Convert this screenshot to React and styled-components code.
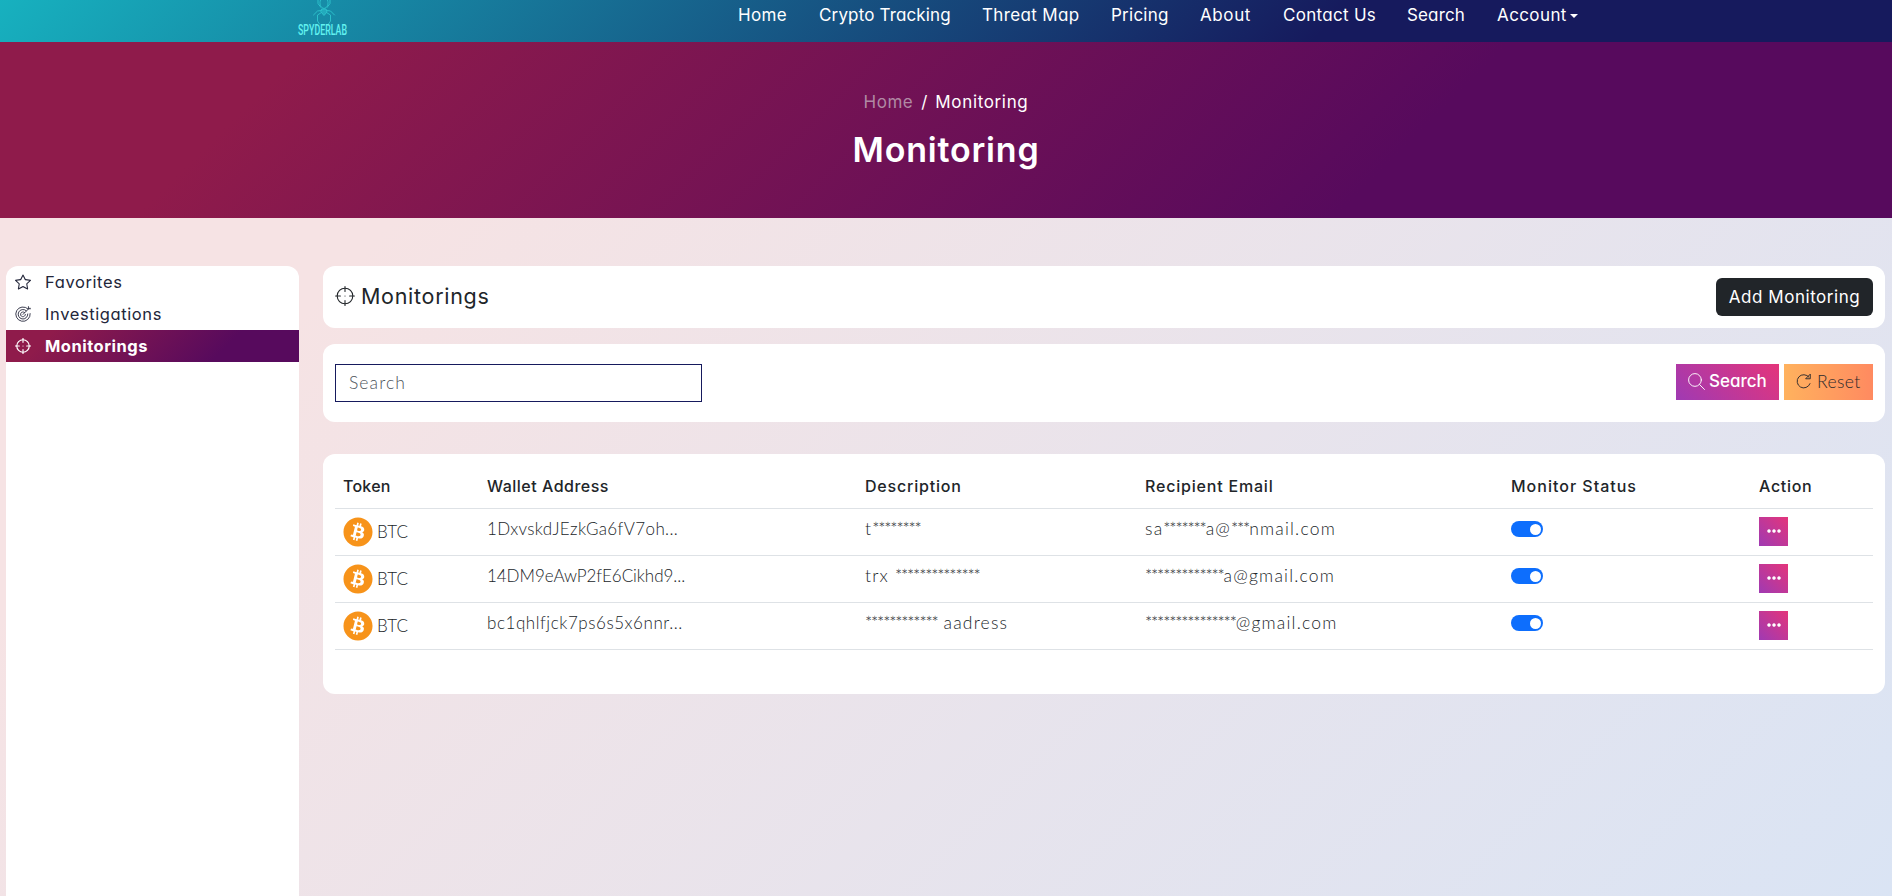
import React from 'react';
import styled, { createGlobalStyle, css } from 'styled-components';
import { BsStar, BsThreeDots } from 'react-icons/bs';
import { FaBitcoin } from 'react-icons/fa';

const sans = `Inter, "Open Sans", sans-serif`;
const light = `Lato, "Open Sans", sans-serif`;
const wine = 'linear-gradient(135deg, #8f1b4b 15%, #570a5d 73%)';
const magenta = 'linear-gradient(45deg, #9f3ab3 0%, #e4357b 100%)';

const GlobalStyle = createGlobalStyle`
  *, *::before, *::after { box-sizing: border-box; }
  html, body { margin: 0; height: 100%; }
  body {
    overflow: hidden;
    color: #212529;
    font-family: ${sans};
    font-size: 17px;
    line-height: 24px;
    font-feature-settings: "cv11", "calt" 0;
  }
`;

const Page = styled.div`
  display: flex;
  flex-direction: column;
  height: 100vh;
  background: linear-gradient(135deg, #f6e3e4 22%, #dae4f4 100%);
`;

const Spaced = styled.span`
  letter-spacing: ${(p) => p.$ls || 0}px;
`;

const NavBar = styled.header`
  display: flex;
  align-items: flex-start;
  flex: none;
  height: 42px;
  padding-left: 296px;
  background: linear-gradient(135deg, #17b1bf 0%, #161a5d 70%);
`;

const Logo = styled.svg`
  display: block;
  flex: none;
  width: 54px;
  height: 40px;
  margin-right: 388px;
`;

const Nav = styled.nav`
  display: flex;
  gap: 32px;
  padding-top: 3px;
`;

const NavLink = styled.a`
  width: ${(p) => p.$w}px;
  color: #fff;
  white-space: nowrap;
  letter-spacing: ${(p) => p.$ls}px;
`;

const Caret = styled.span`
  display: inline-block;
  margin-left: 3px;
  vertical-align: 3px;
  border: 4.5px solid transparent;
  border-top-color: #fff;
  border-bottom: 0;
`;

const Hero = styled.section`
  display: flex;
  flex-direction: column;
  align-items: center;
  flex: none;
  height: 176px;
  padding-top: 48px;
  color: #fff;
  background: ${wine};
`;

const Breadcrumb = styled.div`
  display: flex;
  gap: 8px;
  height: 24px;
`;

const Crumb = styled.a`
  letter-spacing: ${(p) => p.$ls}px;
  ${(p) => p.$muted && css`color: #b08aa4;`}
`;

const Title = styled.h1`
  margin: 16px 0 0;
  font-size: 34px;
  font-weight: 600;
  line-height: 40px;
  letter-spacing: 0.8px;
`;

const Body = styled.div`
  display: flex;
  flex: 1;
  gap: 24px;
  min-height: 0;
  padding: 48px 7px 0 6px;
`;

const Sidebar = styled.aside`
  width: 293px;
  overflow: hidden;
  border-radius: 12px 12px 0 0;
  background: #fff;
`;

const SideItem = styled.a`
  display: flex;
  align-items: center;
  gap: 14px;
  height: 32px;
  padding-left: 9px;
  font-size: 16.5px;
  color: #23263a;
  svg { width: 16px; height: 16px; flex: none; }
  ${(p) => p.$active && css`
    color: #fff;
    font-weight: 700;
    background: ${wine};
    svg { stroke-width: 1.5px; }
  `}
`;

const Main = styled.main`
  display: flex;
  flex: 1;
  flex-direction: column;
  align-items: stretch;
`;

const Card = styled.section`
  padding: 12px;
  border-radius: 12px;
  background: #fff;
`;

const HeadCard = styled(Card)`
  display: flex;
  align-items: center;
  justify-content: space-between;
  height: 62px;
`;

const CardTitle = styled.h2`
  display: flex;
  align-items: center;
  gap: 6px;
  margin: -2px 0 0;
  font-size: 21.5px;
  font-weight: 400;
  letter-spacing: 0.7px;
  svg { width: 20px; height: 20px; }
`;

const DarkButton = styled.button`
  width: 157px;
  height: 38px;
  padding: 0;
  border: 0;
  border-radius: 6px;
  background: #212529;
  color: #fff;
  font: 400 17px/24px ${sans};
  font-feature-settings: inherit;
  letter-spacing: 0.55px;
`;

const FilterCard = styled(Card)`
  display: flex;
  align-items: flex-start;
  height: 78px;
  margin-top: 16px;
  padding-top: 20px;
`;

const SearchInput = styled.input`
  width: 367px;
  height: 38px;
  margin: 0 auto 0 0;
  padding: 0 13px 2px;
  border: 1px solid #161a5d;
  border-radius: 0;
  outline: 0;
  background: #fff;
  font: 300 17.5px ${light};
  letter-spacing: 1.1px;
  &::placeholder { color: #4d545b; opacity: 1; }
`;

const FilterButton = styled.button`
  display: flex;
  align-items: center;
  height: 36px;
  padding: 0 0 2px 12px;
  border: 0;
  svg { width: 17px; height: 17px; flex: none; }
`;

const FindButton = styled(FilterButton)`
  gap: 4px;
  width: 103px;
  margin-right: 5px;
  background: ${magenta};
  color: #fff;
  font: 500 17px ${sans};
  font-feature-settings: inherit;
`;

const ResetButton = styled(FilterButton)`
  gap: 4px;
  width: 89px;
  background: linear-gradient(90deg, #ffb25e, #ff8a60);
  color: #2c2a2c;
  font: 300 17.5px ${light};
  letter-spacing: 0.4px;
`;

const TableCard = styled(Card)`
  height: 240px;
  margin-top: 32px;
`;

const Row = styled.div`
  display: grid;
  grid-template-columns: 144px 378px 280px 366px 248px 1fr;
  height: 47px;
  border-bottom: 1px solid #dee2e6;
  font: 300 17px/24px ${light};
`;

const HeadRow = styled(Row)`
  height: 43px;
  font: 500 16px/24px ${sans};
`;

const Cell = styled.div`
  padding: 8px;
  white-space: nowrap;
`;

const TokenCell = styled(Cell)`
  display: flex;
  align-items: center;
  align-self: start;
  gap: 4px;
`;

const Coin = styled(FaBitcoin)`
  width: 30px;
  height: 30px;
  color: #f7931a;
`;

const Masked = styled.span`
  font-size: 17.5px;
  letter-spacing: 1.2px;
`;

const Stars = styled.span`
  font-size: 17px;
  letter-spacing: -1.18px;
`;

const Toggle = styled.span`
  display: flex;
  align-items: center;
  justify-content: flex-end;
  width: 32px;
  height: 16px;
  margin-top: 4px;
  padding-right: 2.5px;
  border-radius: 8px;
  background: #0d6efd;
  &::after {
    content: "";
    width: 11px;
    height: 11px;
    border-radius: 50%;
    background: #fff;
  }
`;

const MoreButton = styled.button`
  display: flex;
  align-items: center;
  justify-content: center;
  width: 29px;
  height: 29px;
  padding: 0 0 2px;
  border: 0;
  background: ${magenta};
  color: #fff;
  svg { stroke: #fff; stroke-width: 0.5px; }
`;

const LineIcon = styled.svg.attrs({ viewBox: '0 0 20 20' })`
  fill: none;
  stroke: currentColor;
  stroke-width: 1.1px;
  stroke-linecap: round;
  stroke-linejoin: round;
`;

const CrosshairIcon = () => (
  <LineIcon>
    <circle cx="10" cy="10" r="7.8" />
    <path d="M10 .6v4.800M10 14.600v4.800M.6 10h4.800M14.600 10h4.800M10 10h.01" />
  </LineIcon>
);

const RadarIcon = () => (
  <LineIcon>
    <path d="M16.300 3.700A9 9 0 1 0 19 9.500" />
    <path d="M14 5.800A6 6 0 1 0 16 10" />
    <path d="M11.800 8A3 3 0 1 0 13 10.600" />
    <path d="M10 10.500 18 2.500M16.800 .8V3.400H19.400" />
  </LineIcon>
);

const SearchIcon = () => (
  <LineIcon>
    <circle cx="8.200" cy="8.200" r="7.500" />
    <path d="M13.600 13.600 19.400 19.400" />
  </LineIcon>
);

const ResetIcon = () => (
  <LineIcon>
    <path d="M16.500 12.500A7.800 7.800 0 1 1 15.300 4.900" />
    <path d="M16.800 1.800V6.800H11.800z" />
  </LineIcon>
);

const SpiderLogo = () => (
  <Logo viewBox="-2 0 54 40">
    <g fill="none" stroke="#2cc0cb" strokeWidth="1" strokeLinecap="round" strokeLinejoin="round">
      <path d="M22.500 0C21 4 22.500 7.500 26 8.500 29.500 7.500 31 4 29.500 0" />
      <path d="M20 0v3.500l3 4M32 0v3.500l-3 4" />
      <path d="M24 9h4l1 3-3 3.500-3-3.500z" fill="#2cc0cb" fillOpacity=".6" />
      <path d="M23.500 10.500l-4 .5-4 4M28.500 10.500l4 .5 4 4" />
      <path d="M23.500 12.500l-4 2.500v6l2 3M28.500 12.500l4 2.500v6l-2 3" />
    </g>
    <text
      x="0" y="34.500" textLength="49" lengthAdjust="spacingAndGlyphs"
      fill="#62f2f0" fontFamily="Roboto, sans-serif" fontSize="14" fontWeight="500"
    >
      SPYDERLAB
    </text>
  </Logo>
);

const links = [
  ['Home', 49, 0.35], ['Crypto Tracking', 131, 0.15], ['Threat Map', 97, 0.35], ['Pricing', 57, 0.25],
  ['About', 51, 0.6], ['Contact Us', 92, 0.3], ['Search', 58, 0.15], ['Account', 82, 0.4],
];

const columns = [
  ['Token', 0.25], ['Wallet Address', 0.5], ['Description', 0.8],
  ['Recipient Email', 0.8], ['Monitor Status', 1], ['Action', 0.7],
];

const rows = [
  { wallet: '1DxvskdJEzkGa6fV7oh...', ls: 0.35, desc: 't********', email: 'sa*******a@***nmail.com' },
  { wallet: '14DM9eAwP2fE6Cikhd9...', ls: -0.05, desc: 'trx **************', email: '*************a@gmail.com' },
  { wallet: 'bc1qhlfjck7ps6s5x6nnr...', ls: 0.55, desc: '************ aadress', email: '***************@gmail.com' },
];

const MaskedText = ({ children }) => (
  <Masked>
    {children.split(/(\*+)/).filter(Boolean).map((part, i) =>
      part[0] === '*' ? <Stars key={i}>{part}</Stars> : part
    )}
  </Masked>
);

export default function App() {
  return (
    <Page>
      <GlobalStyle />
      <NavBar>
        <SpiderLogo />
        <Nav>
          {links.map(([label, w, ls]) => (
            <NavLink key={label} $w={w} $ls={ls}>
              {label}
              {label === 'Account' && <Caret />}
            </NavLink>
          ))}
        </Nav>
      </NavBar>
      <Hero>
        <Breadcrumb>
          <Crumb $muted $ls={0.5}>Home</Crumb>
          <span>/</span>
          <Crumb $ls={0.65}>Monitoring</Crumb>
        </Breadcrumb>
        <Title>Monitoring</Title>
      </Hero>
      <Body>
        <Sidebar>
          <SideItem><BsStar /><Spaced $ls={0.6}>Favorites</Spaced></SideItem>
          <SideItem><RadarIcon /><Spaced $ls={0.6}>Investigations</Spaced></SideItem>
          <SideItem $active><CrosshairIcon /><Spaced $ls={0.5}>Monitorings</Spaced></SideItem>
        </Sidebar>
        <Main>
          <HeadCard>
            <CardTitle><CrosshairIcon />Monitorings</CardTitle>
            <DarkButton>Add Monitoring</DarkButton>
          </HeadCard>
          <FilterCard>
            <SearchInput placeholder="Search" />
            <FindButton><SearchIcon />Search</FindButton>
            <ResetButton><ResetIcon />Reset</ResetButton>
          </FilterCard>
          <TableCard>
            <HeadRow>
              {columns.map(([label, ls]) => (
                <Cell key={label}><Spaced $ls={ls}>{label}</Spaced></Cell>
              ))}
            </HeadRow>
            {rows.map((row) => (
              <Row key={row.wallet}>
                <TokenCell><Coin />BTC</TokenCell>
                <Cell><Spaced $ls={row.ls}>{row.wallet}</Spaced></Cell>
                <Cell><MaskedText>{row.desc}</MaskedText></Cell>
                <Cell><MaskedText>{row.email}</MaskedText></Cell>
                <Cell><Toggle /></Cell>
                <Cell><MoreButton><BsThreeDots size={16} /></MoreButton></Cell>
              </Row>
            ))}
          </TableCard>
        </Main>
      </Body>
    </Page>
  );
}
